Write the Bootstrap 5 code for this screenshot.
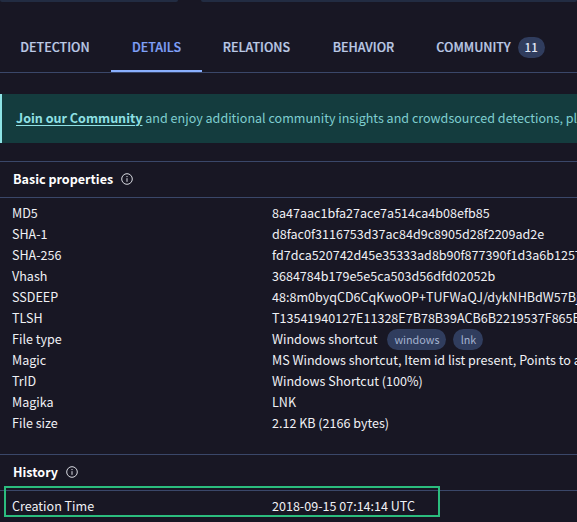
<!DOCTYPE html>
<html lang="en">
<head>
<meta charset="utf-8">
<meta name="viewport" content="width=device-width, initial-scale=1">
<title>File details</title>
<link href="https://cdn.jsdelivr.net/npm/bootstrap@5.3.0/dist/css/bootstrap.min.css" rel="stylesheet">
<style>
body{background:#181724;color:#f0f1f5;font:12.55px/21px "Noto Sans CJK SC","Noto Sans",sans-serif;height:522px}
.summary{height:2px;gap:23px}
.panel-edge{background:#222c42;border-radius:0 0 4px 4px}
.panel-left{width:178px}
.report-tabs{height:71px;border-bottom:1px solid #3a4769}
.report-tabs .nav-link{font-size:12.5px;font-weight:500;-webkit-text-stroke:.2px;line-height:20px;color:#bccae6;padding:0;border-bottom:2px solid transparent;height:49px;margin-top:21px;white-space:nowrap;flex:none;display:flex;align-items:center;justify-content:center}
.report-tabs .nav-link.active{color:#80a1f8;border-bottom-color:#8ab0ff}
.t1{width:110px}.t2{width:91px;margin-left:1px}.t3{width:109px}.t4{width:105px}.t5{width:149px}
.count{background:#303d5e;color:#e4eaf8;width:27px;height:21px;font-size:11.5px;line-height:21px;margin:1px 0 0 7px;-webkit-text-stroke:0}
.join{height:49px;margin-top:21px;padding-bottom:3px;background:#143c3e;border-left:2px solid #8ee3e5;color:#7fced0;padding-left:14px}
.join a{color:#8fe0e4;text-underline-offset:2px}
.basic{margin-top:18px}
.history{margin-top:21px}
.section-head{height:37px;border:solid #3a4769;border-width:1px 0;padding:0 0 1px 13px;color:#fff}
.section-head span{padding-bottom:2px}
.section-head svg{margin-left:8px}
.props{padding:4px 0 0 12px}
.prop{height:21px}
.key{width:260px}
.tag{background:#303d5e;color:#a3b1cf;height:21px;line-height:21px;font-size:10.8px;margin-top:1px}
.tag-windows{width:59px;margin-left:10px}
.tag-lnk{width:30px;margin-left:7px}
.highlight{left:4px;top:486px;width:436px;height:31px;border:2px solid #2bbd7e}
</style>
</head>
<body class="overflow-hidden position-relative">
<div class="summary d-flex"><div class="panel-edge panel-left"></div><div class="panel-edge flex-grow-1"></div></div>
<nav class="report-tabs nav flex-nowrap">
<a class="nav-link t1">DETECTION</a>
<a class="nav-link active t2">DETAILS</a>
<a class="nav-link t3">RELATIONS</a>
<a class="nav-link t4">BEHAVIOR</a>
<a class="nav-link t5">COMMUNITY<span class="count rounded-pill text-center">11</span></a>
</nav>
<div class="join d-flex align-items-center text-nowrap overflow-hidden"><div><a href="#" class="fw-bold">Join our Community</a> <span>and enjoy additional community insights and crowdsourced detections, pl</span></div></div>
<section class="basic">
<div class="section-head d-flex align-items-center fw-bold"><span>Basic properties</span><svg width="12" height="12" viewBox="0 0 12 12" fill="none" stroke="#d9dbe2"><circle cx="6" cy="6" r="5.3"/><path d="M6 5.2v3.6M6 3v1.1"/></svg></div>
<div class="props text-nowrap overflow-hidden">
<div class="prop d-flex"><span class="key flex-shrink-0">MD5</span><span>8a47aac1bfa27ace7a514ca4b08efb85</span></div>
<div class="prop d-flex"><span class="key flex-shrink-0">SHA-1</span><span>d8fac0f3116753d37ac84d9c8905d28f2209ad2e</span></div>
<div class="prop d-flex"><span class="key flex-shrink-0">SHA-256</span><span>fd7dca520742d45e35333ad8b90f877390f1d3a6b1257</span></div>
<div class="prop d-flex"><span class="key flex-shrink-0">Vhash</span><span>3684784b179e5e5ca503d56dfd02052b</span></div>
<div class="prop d-flex"><span class="key flex-shrink-0">SSDEEP</span><span>48:8m0byqCD6CqKwoOP+TUFWaQJ/dykNHBdW57Bj</span></div>
<div class="prop d-flex"><span class="key flex-shrink-0">TLSH</span><span>T13541940127E11328E7B78B39ACB6B2219537F865E</span></div>
<div class="prop d-flex"><span class="key flex-shrink-0">File type</span><span>Windows shortcut</span><span class="tag tag-windows rounded-pill text-center">windows</span><span class="tag tag-lnk rounded-pill text-center">lnk</span></div>
<div class="prop d-flex"><span class="key flex-shrink-0">Magic</span><span>MS Windows shortcut, Item id list present, Points to a</span></div>
<div class="prop d-flex"><span class="key flex-shrink-0">TrID</span><span>Windows Shortcut (100%)</span></div>
<div class="prop d-flex"><span class="key flex-shrink-0">Magika</span><span>LNK</span></div>
<div class="prop d-flex"><span class="key flex-shrink-0">File size</span><span>2.12 KB (2166 bytes)</span></div>
</div>
</section>
<section class="history">
<div class="section-head d-flex align-items-center fw-bold"><span>History</span><svg width="12" height="12" viewBox="0 0 12 12" fill="none" stroke="#d9dbe2"><circle cx="6" cy="6" r="5.3"/><path d="M6 5.2v3.6M6 3v1.1"/></svg></div>
<div class="props text-nowrap"><div class="prop d-flex"><span class="key flex-shrink-0">Creation Time</span><span>2018-09-15 07:14:14 UTC</span></div></div>
</section>
<div class="highlight position-absolute"></div>
<script src="https://cdn.jsdelivr.net/npm/bootstrap@5.3.0/dist/js/bootstrap.bundle.min.js"></script>
</body>
</html>
